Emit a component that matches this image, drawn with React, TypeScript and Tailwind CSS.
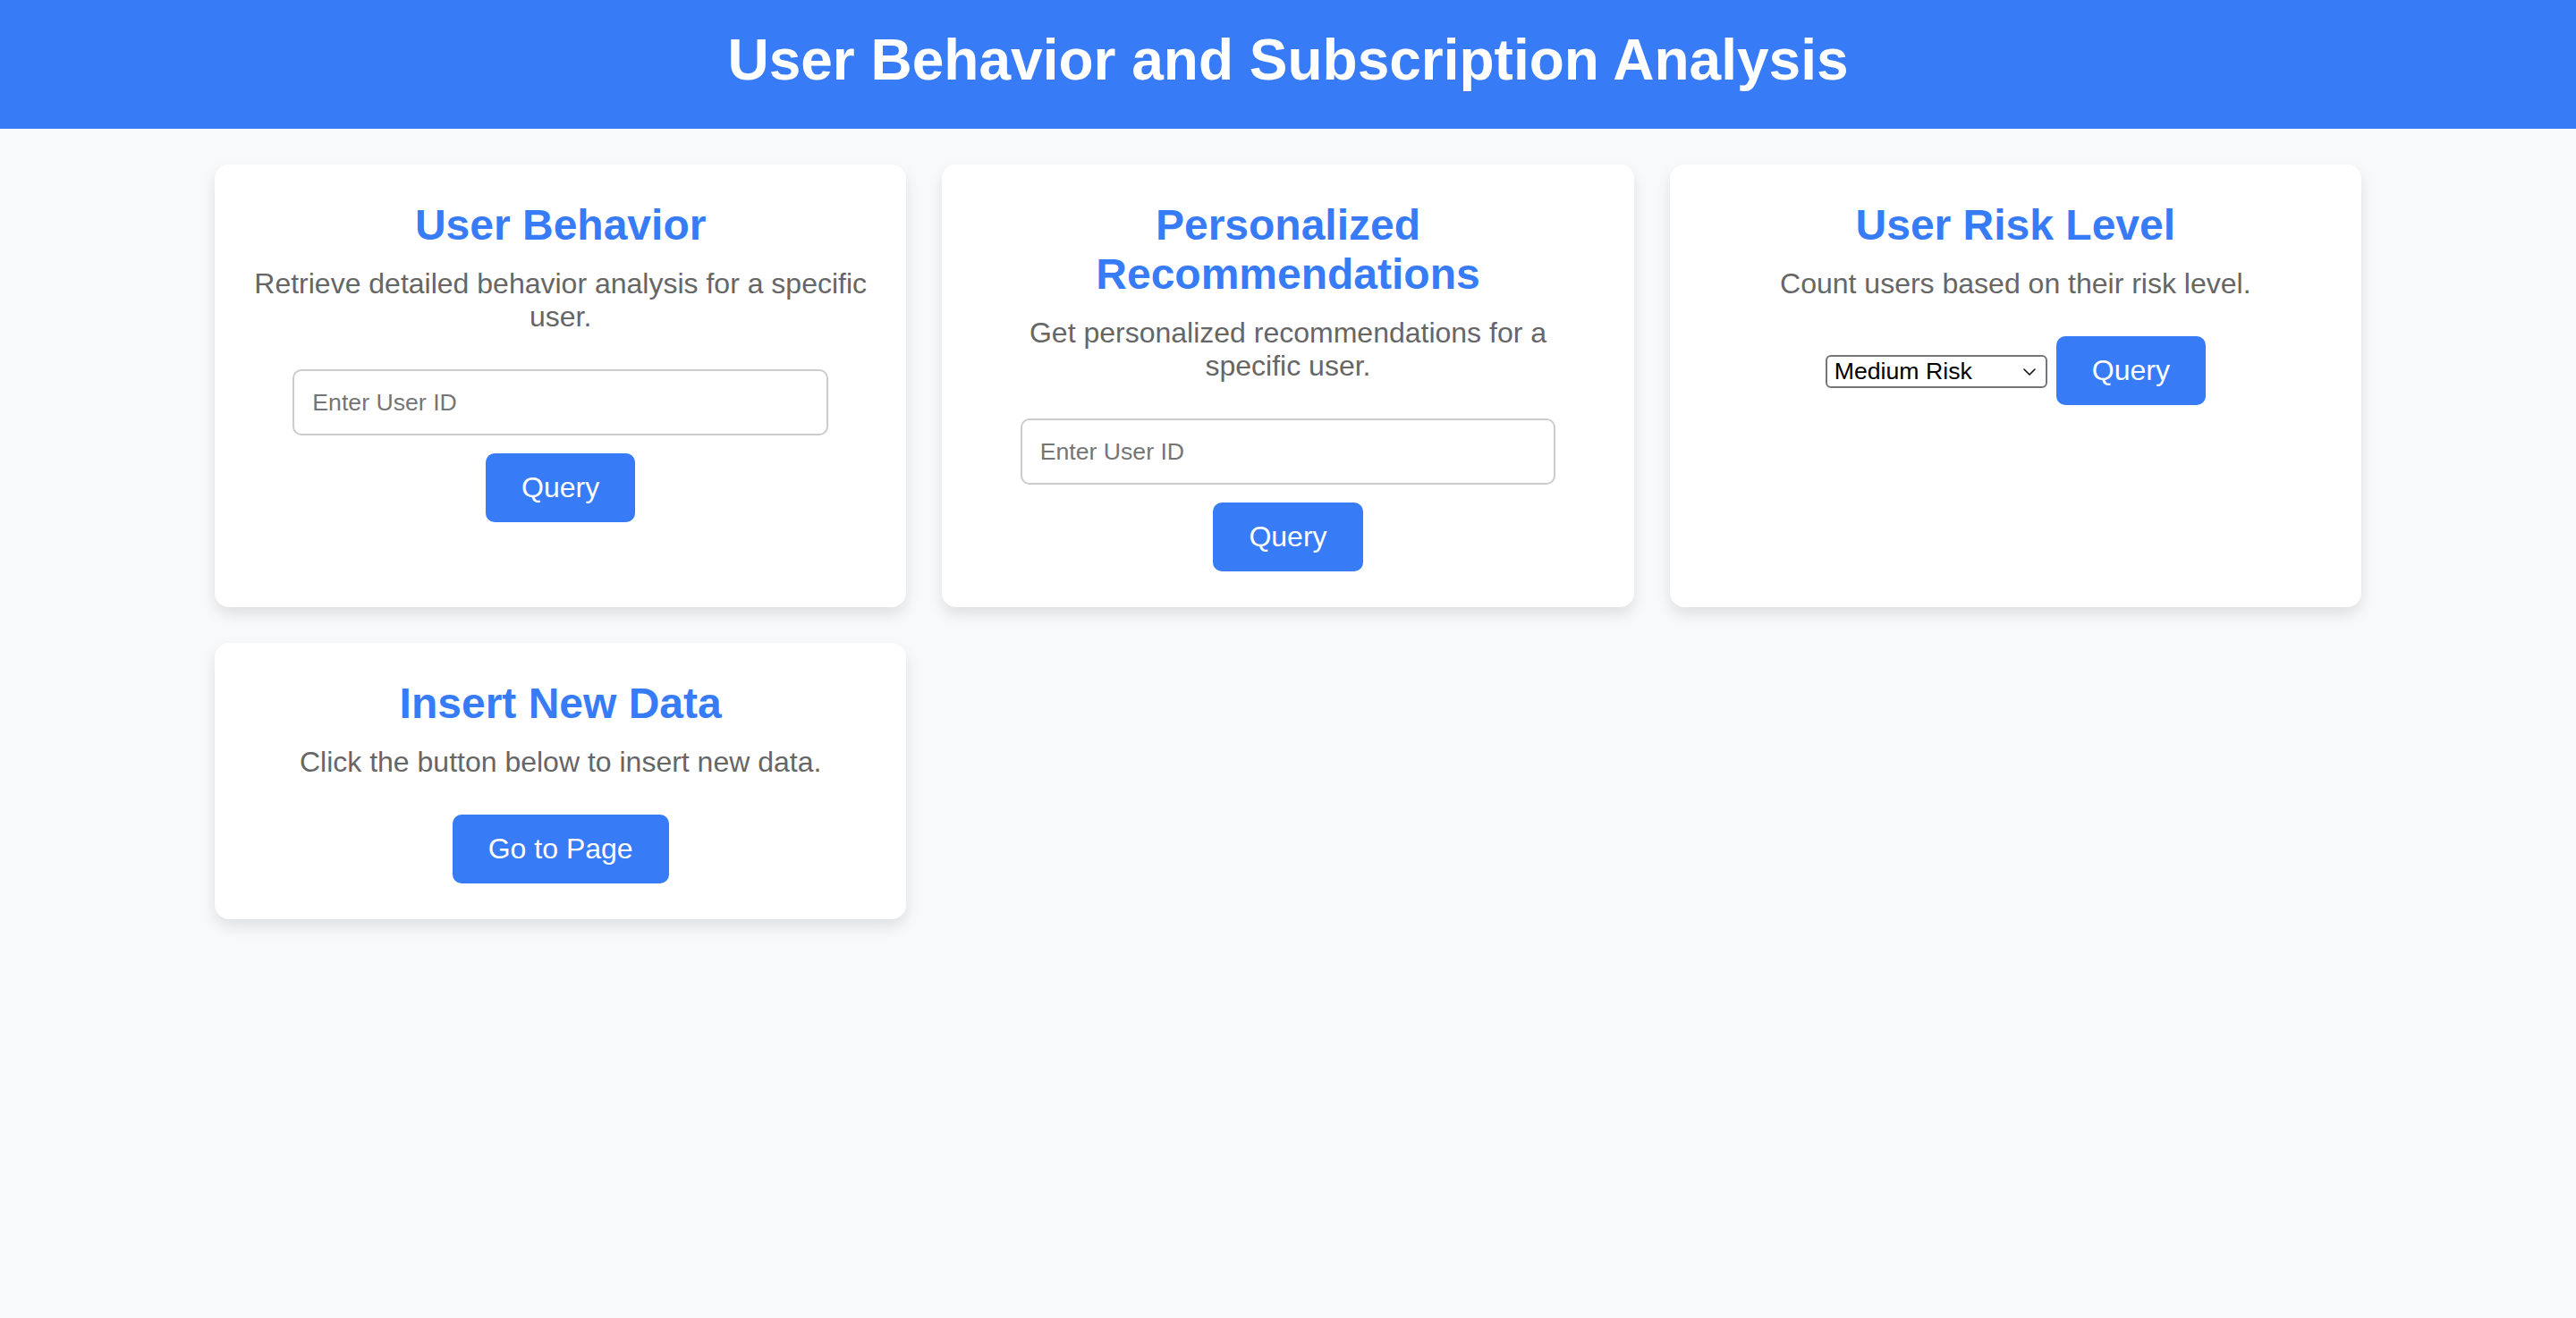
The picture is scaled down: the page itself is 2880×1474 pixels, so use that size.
import React from "react";

const BLUE = "bg-[#377bf6]";

function Card({ children }: { children: React.ReactNode }) {
  return (
    <div className="bg-white rounded-[16px] p-[40px] text-center shadow-[0_8px_16px_rgba(0,0,0,0.1)]">
      {children}
    </div>
  );
}

function Title({ children }: { children: React.ReactNode }) {
  return (
    <h2 className="text-[48px] leading-[55px] font-bold text-[#377bf6] m-0">{children}</h2>
  );
}

function Desc({ children }: { children: React.ReactNode }) {
  return <p className="mt-[20px] text-[32px] leading-[37px] text-[#666666]">{children}</p>;
}

function Btn({ children, className = "" }: { children: React.ReactNode; className?: string }) {
  return (
    <button
      type="button"
      className={`${BLUE} text-white text-[32px] leading-[37px] px-[40px] py-[20px] rounded-[10px] cursor-pointer ${className}`}
    >
      {children}
    </button>
  );
}

function UserInput() {
  return (
    <input
      type="text"
      placeholder="Enter User ID"
      className="block mx-auto mt-[40px] box-border w-[calc(80%+44px)] h-[74px] border-2 border-[#cccccc] rounded-[10px] px-[20px] text-[26.67px] text-black placeholder:text-[#757575] bg-white outline-none"
      style={{ fontFamily: '"Liberation Sans", Arial, sans-serif' }}
    />
  );
}

export default function App() {
  return (
    <div
      className="min-h-screen bg-[#f8f9fa]"
      style={{ fontFamily: '"Liberation Sans", Arial, Helvetica, sans-serif' }}
    >
      <header className={`${BLUE} h-[144px] pt-[30px] text-center`}>
        <h1 className="text-[64px] leading-[74px] font-bold text-white m-0">
          User Behavior and Subscription Analysis
        </h1>
      </header>

      <main className="pt-[40px] px-[40px] pb-[40px]">
        <div className="max-w-[2400px] mx-auto grid grid-cols-3 gap-[40px]">
          <Card>
            <Title>User Behavior</Title>
            <Desc>Retrieve detailed behavior analysis for a specific user.</Desc>
            <UserInput />
            <Btn className="mt-[20px]">Query</Btn>
          </Card>

          <Card>
            <Title>Personalized Recommendations</Title>
            <Desc>Get personalized recommendations for a specific user.</Desc>
            <UserInput />
            <Btn className="mt-[20px]">Query</Btn>
          </Card>

          <Card>
            <Title>User Risk Level</Title>
            <Desc>Count users based on their risk level.</Desc>
            <div className="mt-[40px] flex items-center justify-center gap-[10px]">
              <div className="relative w-[248px] h-[37px] mt-[2px]">
                <select
                  defaultValue="medium"
                  className="appearance-none w-full h-full box-border border-2 border-[#767676] rounded-[6px] bg-white text-black text-[26.67px] leading-[31px] pl-[8px] pr-[30px] outline-none"
                  style={{ fontFamily: '"Liberation Sans", Arial, sans-serif' }}
                >
                  <option value="low">Low Risk</option>
                  <option value="medium">Medium Risk</option>
                  <option value="high">High Risk</option>
                </select>
                <svg
                  className="absolute right-[13px] top-1/2 -translate-y-1/2 pointer-events-none"
                  width="14"
                  height="9"
                  viewBox="0 0 14 9"
                  fill="none"
                >
                  <path d="M1 1.5 L7 7.5 L13 1.5" stroke="#111" strokeWidth="1.6" strokeLinecap="round" strokeLinejoin="round" />
                </svg>
              </div>
              <Btn>Query</Btn>
            </div>
          </Card>

          <Card>
            <Title>Insert New Data</Title>
            <Desc>Click the button below to insert new data.</Desc>
            <Btn className="mt-[40px]">Go to Page</Btn>
          </Card>
        </div>
      </main>
    </div>
  );
}
